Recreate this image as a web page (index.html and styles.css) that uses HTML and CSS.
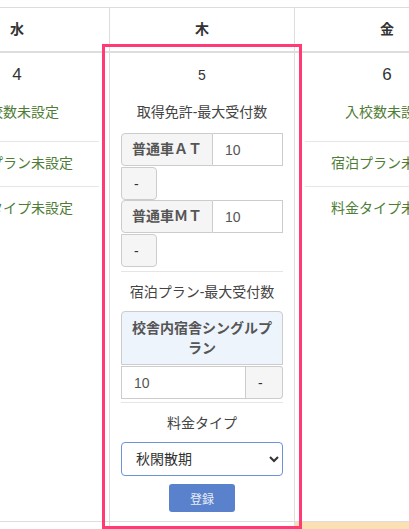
FILE: index.html
```html
<!DOCTYPE html>
<html lang="ja">
<head>
<meta charset="utf-8">
<title>受付設定</title>
<link rel="stylesheet" href="styles.css">
</head>
<body>
<div class="page">
  <div class="week">
    <div class="hd">水</div>
    <div class="hd">木</div>
    <div class="hd">金</div>

    <div class="cell day">
      <div class="num">4</div>
      <ul class="status">
        <li>入校数未設定</li>
        <li>宿泊プラン未設定</li>
        <li>料金タイプ未設定</li>
      </ul>
    </div>

    <div class="cell edit">
      <div class="num">5</div>
      <div class="title t1">取得免許-最大受付数</div>
      <div class="group first">
        <span class="addon">普通車ＡＴ</span>
        <input class="field" type="text" value="10">
      </div>
      <button class="minus" type="button">-</button>
      <div class="group">
        <span class="addon">普通車ＭＴ</span>
        <input class="field" type="text" value="10">
      </div>
      <button class="minus" type="button">-</button>
      <div class="rule r1"></div>
      <div class="title t2">宿泊プラン-最大受付数</div>
      <div class="plan">校舎内宿舎シングルプラン</div>
      <div class="planrow">
        <input class="field" type="text" value="10">
        <button class="minus side" type="button">-</button>
      </div>
      <div class="rule r2"></div>
      <div class="title t2">料金タイプ</div>
      <select class="choice">
        <option>秋閑散期</option>
      </select>
      <button class="submit" type="button">登録</button>
    </div>

    <div class="cell day">
      <div class="num">6</div>
      <ul class="status">
        <li>入校数未設定</li>
        <li>宿泊プラン未設定</li>
        <li>料金タイプ未設定</li>
      </ul>
    </div>

    <div class="cell foot"></div>
    <div class="cell foot"></div>
    <div class="cell foot hl"></div>
  </div>
  <div class="focus"></div>
</div>
</body>
</html>
```

FILE: styles.css
```css
html, body {
  margin: 0;
  padding: 0;
  overflow: hidden;
  background: #fff;
}

body {
  font-family: "Liberation Sans", "Noto Sans CJK JP", sans-serif;
  font-size: 14px;
  line-height: 20px;
  color: #333;
}

.page {
  position: relative;
  padding-top: 7px;
  height: 522px;
}

.week {
  display: grid;
  grid-template-columns: 185px 185px 185px;
  width: 555px;
  margin-left: -75px;
  border-top: 1px solid #dddddd;
}

.hd {
  box-sizing: border-box;
  height: 45px;
  border-right: 1px solid #dddddd;
  border-bottom: 2px solid #dddddd;
  text-align: center;
  font-weight: bold;
  line-height: 43px;
  color: #333;
}

.cell {
  box-sizing: border-box;
  border-right: 1px solid #dddddd;
  border-bottom: 1px solid #dddddd;
}

.day {
  padding: 12px 10px 0;
  text-align: center;
}

.num {
  text-align: center;
  color: #333;
}

.day .num {
  font-size: 17px;
}

.status {
  list-style: none;
  margin: 17px 0 0;
  padding: 0;
  color: #4f7d36;
}

.status li {
  padding: 11px 0 13px;
  border-top: 1px solid #e6e6e6;
}

.status li:first-child {
  padding: 0 0 19px;
  border-top: none;
}

.edit {
  padding: 12px 11px 9px;
  display: flex;
  flex-direction: column;
}

.title {
  text-align: center;
  color: #444;
}

.t1 {
  margin-top: 17px;
}

.t2 {
  margin-top: 10px;
}

.group {
  display: flex;
  height: 33px;
  box-sizing: border-box;
}

.group.first {
  margin-top: 11px;
}

.addon {
  flex: none;
  box-sizing: border-box;
  width: 92px;
  height: 33px;
  border: 1px solid #cccccc;
  border-radius: 4px 0 0 4px;
  background: #f5f5f5;
  color: #555;
  font-weight: bold;
  text-align: center;
  line-height: 31px;
  white-space: nowrap;
}

.field {
  flex: 1;
  min-width: 0;
  box-sizing: border-box;
  height: 33px;
  margin: 0;
  padding: 0 12px;
  border: 1px solid #cccccc;
  border-left: none;
  border-radius: 0;
  background: #fff;
  font-family: "Liberation Sans", "Noto Sans CJK JP", sans-serif;
  font-size: 14px;
  color: #555;
  outline: none;
}

.minus {
  align-self: flex-start;
  box-sizing: border-box;
  width: 36px;
  height: 33px;
  margin: 1px 0 0;
  padding: 0 0 0 12px;
  border: 1px solid #cccccc;
  border-radius: 0 4px 4px 4px;
  background: #f5f5f5;
  color: #333;
  text-align: left;
  font-family: "Liberation Sans", "Noto Sans CJK JP", sans-serif;
  font-size: 14px;
}

.rule {
  height: 1px;
  background: #e5e5e5;
}

.r1 {
  margin-top: 4px;
}

.r2 {
  margin-top: 3px;
}

.plan {
  box-sizing: border-box;
  margin-top: 9px;
  height: 54px;
  padding: 6px 5px;
  border: 1px solid #cccccc;
  border-radius: 4px 4px 0 0;
  background: #edf4fc;
  color: #555;
  font-weight: bold;
  text-align: center;
  line-height: 20px;
}

.planrow {
  display: flex;
  margin-top: 1px;
  height: 33px;
}

.planrow .field {
  border-left: 1px solid #cccccc;
}

.minus.side {
  flex: none;
  width: 37px;
  margin: 0;
  border-left: none;
  border-radius: 0 3px 4px 0;
}

.choice {
  box-sizing: border-box;
  margin-top: 9px;
  height: 34px;
  width: 100%;
  padding: 0 10px;
  border: 1px solid #6a93d8;
  border-radius: 4px;
  background: #fff;
  color: #333;
  font-family: "Liberation Sans", "Noto Sans CJK JP", sans-serif;
  font-size: 14px;
  outline: none;
}

.submit {
  align-self: center;
  box-sizing: border-box;
  margin-top: 8px;
  width: 66px;
  height: 28px;
  padding: 0;
  border: none;
  border-radius: 3px;
  background: #5a81cb;
  color: rgba(255, 255, 255, 0.88);
  font-family: "Liberation Sans", "Noto Sans CJK JP", sans-serif;
  font-size: 12px;
}

.foot {
  height: 30px;
  border-bottom: none;
}

.foot.hl {
  background: #fae0b2;
}

.focus {
  position: absolute;
  left: 102px;
  top: 44px;
  width: 200px;
  height: 485px;
  box-sizing: border-box;
  border: 3px solid #ff3a74;
  pointer-events: none;
}
```
